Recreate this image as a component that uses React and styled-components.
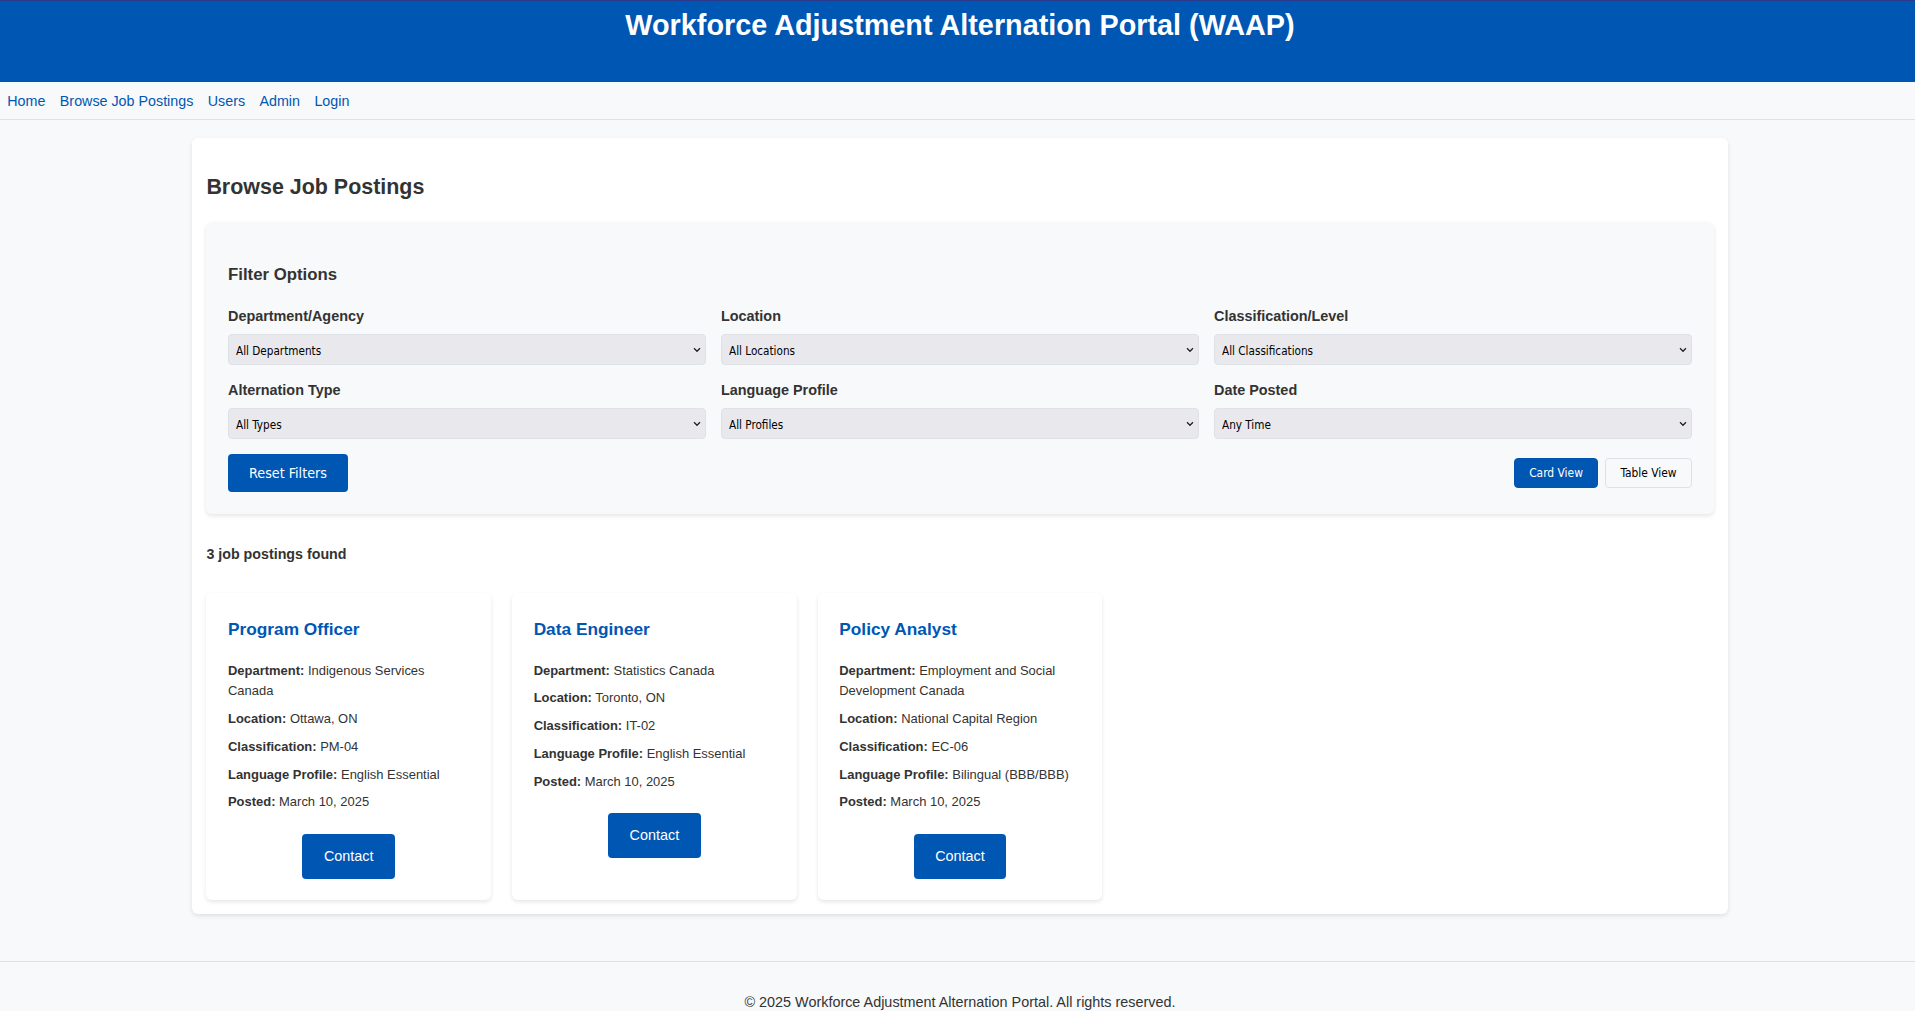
import React from "react";
import styled, { createGlobalStyle } from "styled-components";

const Global = createGlobalStyle`
  html, body { margin: 0; padding: 0; height: 100%; overflow: hidden; }
  body { background: #f8f9fa; color: #333; font-family: "Liberation Sans", Arial, sans-serif; }
  #root { width: 1920px; }
  * { box-sizing: border-box; }
`;
const BLUE = "#0056b3";
const UI = `"DejaVu Sans", "Noto Sans", sans-serif`;
const CHEVRON = `url("data:image/svg+xml,%3Csvg xmlns='http://www.w3.org/2000/svg' width='8' height='6' viewBox='0 0 8 6'%3E%3Cpath d='M1 1.2 4 4.3 7 1.2' fill='none' stroke='%23222' stroke-width='1.3'/%3E%3C/svg%3E")`;

const Header = styled.header`
  height: 82px; background: ${BLUE}; border-top: 1px solid #2b3a8a; color: #fff; text-align: center;
`;
const Title = styled.h1`
  margin: 0; padding-top: 6px; font-size: 28.8px; line-height: 36px; font-weight: 700;
`;
const Nav = styled.nav`
  height: 38px; display: flex; align-items: center; gap: 14.4px; padding: 1px 0 0 7.3px;
  background: #f8f9fa; border-bottom: 1px solid #dee2e6;
`;
const NavLink = styled.a`
  color: ${BLUE}; font-size: 14.3px; text-decoration: none;
`;
const Main = styled.main`
  padding: 18px 192px 0;
`;
const Panel = styled.section`
  background: #fff; border-radius: 6px; box-shadow: 0 2px 4px rgba(0,0,0,.1); padding: 0 14.4px 14px; height: 776px;
`;
const PageTitle = styled.h2`
  margin: 0; padding-top: 36px; height: 84px; font-size: 21.45px; line-height: 26px; font-weight: 700; color: #333;
`;
const Filters = styled.div`
  background: #f8f9fa; border-radius: 6px; box-shadow: 0 2px 4px rgba(0,0,0,.1); height: 292px; padding: 43px 21.6px 0;
`;
const FilterTitle = styled.h3`
  margin: 0 0 23.4px; font-size: 16.8px; line-height: 20px; font-weight: 700; color: #333;
`;
const FilterGrid = styled.div`
  display: grid; grid-template-columns: repeat(3, 1fr); column-gap: 15px; row-gap: 17.5px;
`;
const Field = styled.label`
  display: flex; flex-direction: column;
`;
const FieldLabel = styled.span`
  font-size: 14.4px; line-height: 17px; font-weight: 700; color: #333; margin-bottom: 9px;
`;
const Select = styled.select`
  appearance: none; height: 30.5px; width: 100%; padding: 2px 20px 0 7px; font-family: ${UI}; font-stretch: condensed; font-size: 11.65px; color: #000;
  background: #e9e9ed ${CHEVRON} no-repeat right 4px center; border: 1px solid #dee2e6; border-radius: 4px;
`;
const Actions = styled.div`
  display: flex; justify-content: space-between; align-items: center; margin-top: 15px;
`;
const ResetButton = styled.button`
  width: 120px; height: 38px; padding: 1px 0 0; border: 0; border-radius: 4px; background: ${BLUE}; color: #fff;
  font-family: ${UI}; font-stretch: condensed; font-size: 14.2px;
`;
const ViewToggle = styled.div`
  display: flex; gap: 7px;
`;
const ViewButton = styled.button`
  height: 30px; width: ${p => p.$w}px; padding: 1px 0 0; border-radius: 4px; font-family: ${UI}; font-stretch: condensed; font-size: 11.9px;
  border: 1px solid ${p => (p.$active ? BLUE : "#dee2e6")};
  background: ${p => (p.$active ? BLUE : "#f8f9fa")};
  color: ${p => (p.$active ? "#fff" : "#000")};
`;
const Count = styled.p`
  margin: 32px 0 31px; font-size: 14.25px; line-height: 16px; font-weight: 700; color: #333;
`;
const Cards = styled.div`
  display: grid; grid-template-columns: repeat(5, 1fr); column-gap: 21px;
`;
const Card = styled.article`
  height: 307px; background: #fff; border-radius: 6px; box-shadow: 0 2px 4px rgba(0,0,0,.1); padding: 26px 21.6px 0;
`;
const CardTitle = styled.h4`
  margin: 0 0 21.6px; font-size: 17.3px; line-height: 20px; font-weight: 700; color: ${BLUE};
`;
const Row = styled.p`
  margin: 0 0 7.024px; font-size: 12.96px; line-height: 20.736px; color: #333;
  b { font-weight: 700; }
`;
const ContactWrap = styled.div`
  display: flex; justify-content: center; margin-top: 20.6px;
`;
const ContactButton = styled.button`
  height: 45px; padding: 0 21.6px; border: 0; border-radius: 4px; background: ${BLUE}; color: #fff;
  font-family: "Liberation Sans", Arial, sans-serif; font-size: 14.4px;
`;
const Footer = styled.footer`
  margin-top: 47px; padding-top: 31px; border-top: 1px solid #dee2e6; text-align: center; font-size: 14.4px; line-height: 19px; color: #333;
`;

const fields = [
  ["Department/Agency", "All Departments"],
  ["Location", "All Locations"],
  ["Classification/Level", "All Classifications"],
  ["Alternation Type", "All Types"],
  ["Language Profile", "All Profiles"],
  ["Date Posted", "Any Time"],
];
const jobs = [
  { t: "Program Officer", d: "Indigenous Services Canada", l: "Ottawa, ON", c: "PM-04", p: "English Essential" },
  { t: "Data Engineer", d: "Statistics Canada", l: "Toronto, ON", c: "IT-02", p: "English Essential" },
  { t: "Policy Analyst", d: "Employment and Social Development Canada", l: "National Capital Region", c: "EC-06", p: "Bilingual (BBB/BBB)" },
];

export default function App() {
  return (
    <>
      <Global />
      <Header><Title>Workforce Adjustment Alternation Portal (WAAP)</Title></Header>
      <Nav>
        {["Home", "Browse Job Postings", "Users", "Admin", "Login"].map(n => <NavLink key={n} href="#">{n}</NavLink>)}
      </Nav>
      <Main>
        <Panel>
          <PageTitle>Browse Job Postings</PageTitle>
          <Filters>
            <FilterTitle>Filter Options</FilterTitle>
            <FilterGrid>
              {fields.map(([l, v]) => (
                <Field key={l}>
                  <FieldLabel>{l}</FieldLabel>
                  <Select defaultValue={v}><option>{v}</option></Select>
                </Field>
              ))}
            </FilterGrid>
            <Actions>
              <ResetButton>Reset Filters</ResetButton>
              <ViewToggle>
                <ViewButton $active $w={84}>Card View</ViewButton>
                <ViewButton $w={87}>Table View</ViewButton>
              </ViewToggle>
            </Actions>
          </Filters>
          <Count>3 job postings found</Count>
          <Cards>
            {jobs.map(j => (
              <Card key={j.t}>
                <CardTitle>{j.t}</CardTitle>
                <Row><b>Department:</b> {j.d}</Row>
                <Row><b>Location:</b> {j.l}</Row>
                <Row><b>Classification:</b> {j.c}</Row>
                <Row><b>Language Profile:</b> {j.p}</Row>
                <Row><b>Posted:</b> March 10, 2025</Row>
                <ContactWrap><ContactButton>Contact</ContactButton></ContactWrap>
              </Card>
            ))}
          </Cards>
        </Panel>
      </Main>
      <Footer>© 2025 Workforce Adjustment Alternation Portal. All rights reserved.</Footer>
    </>
  );
}
